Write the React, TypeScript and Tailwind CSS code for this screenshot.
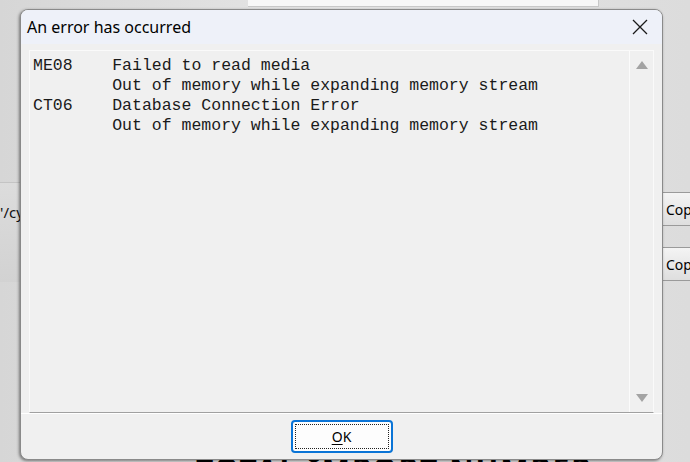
import React from "react";

const mono = { fontFamily: '"Liberation Mono", "Courier New", monospace' };
const ui = { fontFamily: '"Noto Sans", "Segoe UI", sans-serif' };

const lines = [
  "ME08    Failed to read media",
  "        Out of memory while expanding memory stream",
  "CT06    Database Connection Error",
  "        Out of memory while expanding memory stream",
];

function Backdrop() {
  return (
    <>
      {/* window bits behind the dialog */}
      <div className="absolute left-[248px] top-0 h-[7px] w-[351px] border-b border-r border-[#c8c8c8] bg-[#f7f7f7]" />
      <div className="absolute left-0 top-[182px] h-[100px] w-[24px] border-t border-[#c4c4c4] bg-gradient-to-b from-[#dcdcdc] to-[#d2d2d2]">
        <span className="absolute left-0 top-[18px] text-[15px] text-[#111]" style={ui}>
          '/cy
        </span>
      </div>
      <div className="absolute left-[662px] top-[192px] flex h-[34px] w-[40px] items-center border border-[#9a9a9a] bg-gradient-to-b from-[#f4f4f4] to-[#dedede] pl-[3px] text-[14px] text-black" style={ui}>
        Cop
      </div>
      <div className="absolute left-[662px] top-[247px] flex h-[34px] w-[40px] items-center border border-[#9a9a9a] bg-gradient-to-b from-[#f4f4f4] to-[#dedede] pl-[3px] text-[14px] text-black" style={ui}>
        Cop
      </div>
      <div className="absolute left-[196px] top-[454px] whitespace-nowrap text-[30px] font-bold leading-none tracking-[2px] text-black" style={ui}>
        TOTAL IMPORT NUMBER
      </div>
    </>
  );
}

function Triangle({ down }: { down?: boolean }) {
  return (
    <svg width="12" height="8" viewBox="0 0 12 8">
      <path d={down ? "M0 0 L12 0 L6 8 Z" : "M6 0 L12 8 L0 8 Z"} fill="#a3a3a3" />
    </svg>
  );
}

export default function App() {
  return (
    <div className="relative h-[462px] w-[690px] overflow-hidden bg-gradient-to-r from-[#d6d6d6] via-[#e6e6e6] to-[#dcdcdc]">
      <Backdrop />

      <div className="absolute left-[20px] top-[9px] flex h-[451px] w-[643px] flex-col overflow-hidden rounded-[8px] border border-[#8a8a8a] bg-[#f0f0f0] shadow-[-1px_1px_3px_rgba(0,0,0,0.45)]">
        {/* title bar */}
        <div className="flex h-[34px] shrink-0 items-center justify-between bg-[#eef1f9] pl-[6px] pr-[14px]">
          <span className="text-[16px] text-black" style={ui}>
            An error has occurred
          </span>
          <svg width="16" height="16" viewBox="0 0 16 16">
            <path d="M1 1 L15 15 M15 1 L1 15" stroke="#1a1a1a" strokeWidth="1.3" />
          </svg>
        </div>

        {/* message box */}
        <div className="mx-[8px] mt-[6px] flex h-[363px] shrink-0 border border-[#fafafa] border-b-[#a0a0a0] bg-[#f0f0f0]">
          <div className="flex-1 pl-[3px] pt-[5px] text-[16.5px] leading-[20px] text-[#1a1a1a]" style={mono}>
            {lines.map((l, i) => (
              <div key={i} className="whitespace-pre">
                {l}
              </div>
            ))}
          </div>
          <div className="flex w-[24px] flex-col items-center justify-between border-l border-[#fbfbfb] bg-[#f0f0f0] pb-[10px] pt-[10px]">
            <Triangle />
            <Triangle down />
          </div>
        </div>

        {/* footer */}
        <div className="flex flex-1 items-center justify-center border-t border-white">
          <button className="flex h-[33px] w-[102px] items-center justify-center rounded-[4px] border-2 border-[#0a74d6] bg-[#fdfdfd] p-[2px]">
            <span className="flex h-full w-full items-center justify-center border border-dotted border-[#222] text-[14px] text-black" style={ui}>
              <span className="underline underline-offset-2">O</span>K
            </span>
          </button>
        </div>
      </div>
    </div>
  );
}
